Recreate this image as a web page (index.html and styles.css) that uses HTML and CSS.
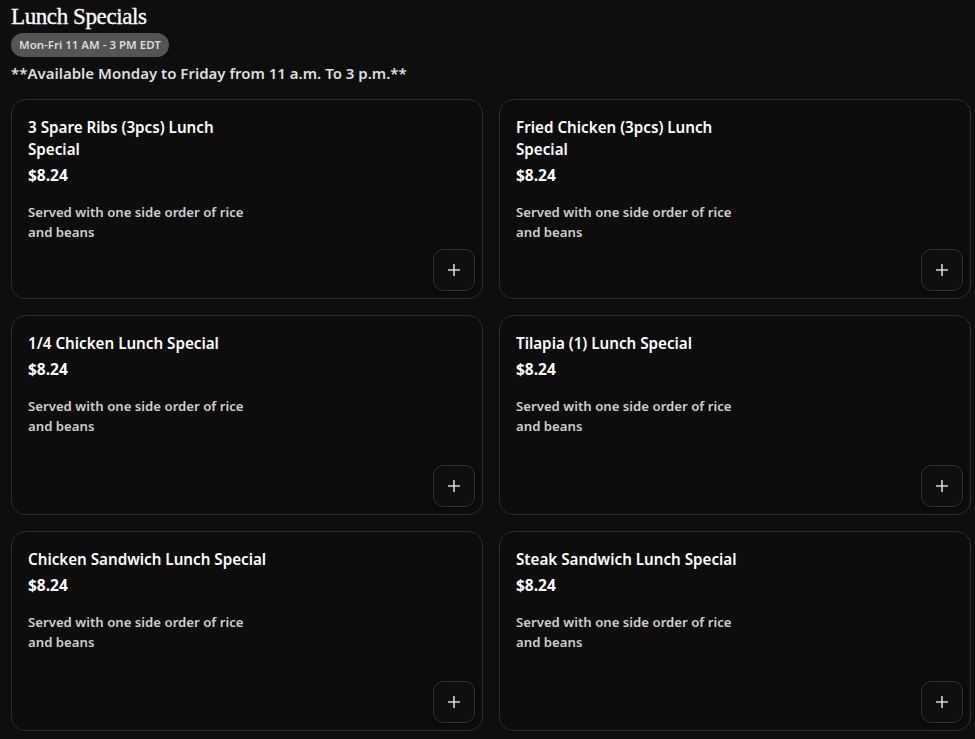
FILE: index.html
```html
<!DOCTYPE html>
<html lang="en">
<head>
<meta charset="utf-8">
<title>Lunch Specials</title>
<link rel="stylesheet" href="styles.css">
</head>
<body>
<section class="menu">
  <header class="menu-head">
    <h2 class="menu-title">Lunch Specials</h2>
    <span class="hours">Mon-Fri 11 AM - 3 PM EDT</span>
    <p class="note">**Available Monday to Friday from 11 a.m. To 3 p.m.**</p>
  </header>
  <div class="grid">
    <article class="card">
      <div class="info">
        <h3 class="name">3 Spare Ribs (3pcs) Lunch Special</h3>
        <div class="price">$8.24</div>
        <p class="desc">Served with one side order of rice and beans</p>
      </div>
      <div class="actions"><button class="add" aria-label="Add"><svg viewBox="0 0 16 16" width="16" height="16"><path d="M8 2v12M2 8h12" stroke="currentColor" stroke-width="1.6" fill="none"/></svg></button></div>
    </article>
    <article class="card">
      <div class="info">
        <h3 class="name">Fried Chicken (3pcs) Lunch Special</h3>
        <div class="price">$8.24</div>
        <p class="desc">Served with one side order of rice and beans</p>
      </div>
      <div class="actions"><button class="add" aria-label="Add"><svg viewBox="0 0 16 16" width="16" height="16"><path d="M8 2v12M2 8h12" stroke="currentColor" stroke-width="1.6" fill="none"/></svg></button></div>
    </article>
    <article class="card">
      <div class="info">
        <h3 class="name">1/4 Chicken Lunch Special</h3>
        <div class="price">$8.24</div>
        <p class="desc">Served with one side order of rice and beans</p>
      </div>
      <div class="actions"><button class="add" aria-label="Add"><svg viewBox="0 0 16 16" width="16" height="16"><path d="M8 2v12M2 8h12" stroke="currentColor" stroke-width="1.6" fill="none"/></svg></button></div>
    </article>
    <article class="card">
      <div class="info">
        <h3 class="name">Tilapia (1) Lunch Special</h3>
        <div class="price">$8.24</div>
        <p class="desc">Served with one side order of rice and beans</p>
      </div>
      <div class="actions"><button class="add" aria-label="Add"><svg viewBox="0 0 16 16" width="16" height="16"><path d="M8 2v12M2 8h12" stroke="currentColor" stroke-width="1.6" fill="none"/></svg></button></div>
    </article>
    <article class="card">
      <div class="info">
        <h3 class="name">Chicken Sandwich Lunch Special</h3>
        <div class="price">$8.24</div>
        <p class="desc">Served with one side order of rice and beans</p>
      </div>
      <div class="actions"><button class="add" aria-label="Add"><svg viewBox="0 0 16 16" width="16" height="16"><path d="M8 2v12M2 8h12" stroke="currentColor" stroke-width="1.6" fill="none"/></svg></button></div>
    </article>
    <article class="card">
      <div class="info">
        <h3 class="name">Steak Sandwich Lunch Special</h3>
        <div class="price">$8.24</div>
        <p class="desc">Served with one side order of rice and beans</p>
      </div>
      <div class="actions"><button class="add" aria-label="Add"><svg viewBox="0 0 16 16" width="16" height="16"><path d="M8 2v12M2 8h12" stroke="currentColor" stroke-width="1.6" fill="none"/></svg></button></div>
    </article>
  </div>
</section>
</body>
</html>
```
FILE: styles.css
```css
* { box-sizing: border-box; }
html, body { background: #0e0e0e; }
body {
  margin: 0;
  padding: 4px 4px 0 11px;
  font-family: "Noto Sans", "Open Sans", sans-serif;
  color: #fff;
}
.menu-head { display: flex; flex-direction: column; align-items: flex-start; }
.menu-title {
  margin: 0;
  font-family: "Liberation Serif", "DejaVu Serif", serif;
  font-weight: 400;
  font-size: 23px;
  line-height: 26px;
  letter-spacing: -0.4px;
  color: #fff;
  -webkit-text-stroke: 0.3px #fff;
}
.hours {
  margin-top: 3px;
  height: 24px;
  padding: 0 8px;
  border-radius: 12px;
  background: #545454;
  color: #dcdcdc;
  font-size: 11.5px;
  font-weight: 600;
  line-height: 24px;
}
.note {
  margin: 4px 0 0;
  font-size: 15px;
  font-weight: 600;
  line-height: 24px;
  color: #dedede;
}
.grid {
  margin-top: 14px;
  display: grid;
  grid-template-columns: 1fr 1fr;
  gap: 16px;
}
.card {
  height: 200px;
  border: 1px solid #2d2d2d;
  border-radius: 14px;
  background: #0d0d0d;
  padding: 16px 16px 0;
  display: flex;
  flex-direction: column;
}
.info { flex: 1; }
.name {
  margin: 0;
  max-width: 240px;
  font-size: 15.2px;
  font-weight: 600;
  line-height: 22px;
  color: #fff;
}
.price {
  margin-top: 4px;
  font-size: 15.5px;
  font-weight: 700;
  line-height: 22px;
  color: #fff;
}
.desc {
  margin: 16px 0 0;
  max-width: 232px;
  font-size: 13.2px;
  font-weight: 600;
  line-height: 20px;
  color: #cfcfcf;
}
.actions { display: flex; justify-content: flex-end; margin-right: -9px; padding-bottom: 7px; }
.add {
  width: 42px;
  height: 42px;
  border-radius: 10px;
  border: 1px solid #333;
  background: #0f0f0f;
  color: #d6d6d6;
  display: flex;
  align-items: center;
  justify-content: center;
  padding: 0;
  box-shadow: 0 2px 4px rgba(0,0,0,0.6);
}
```
